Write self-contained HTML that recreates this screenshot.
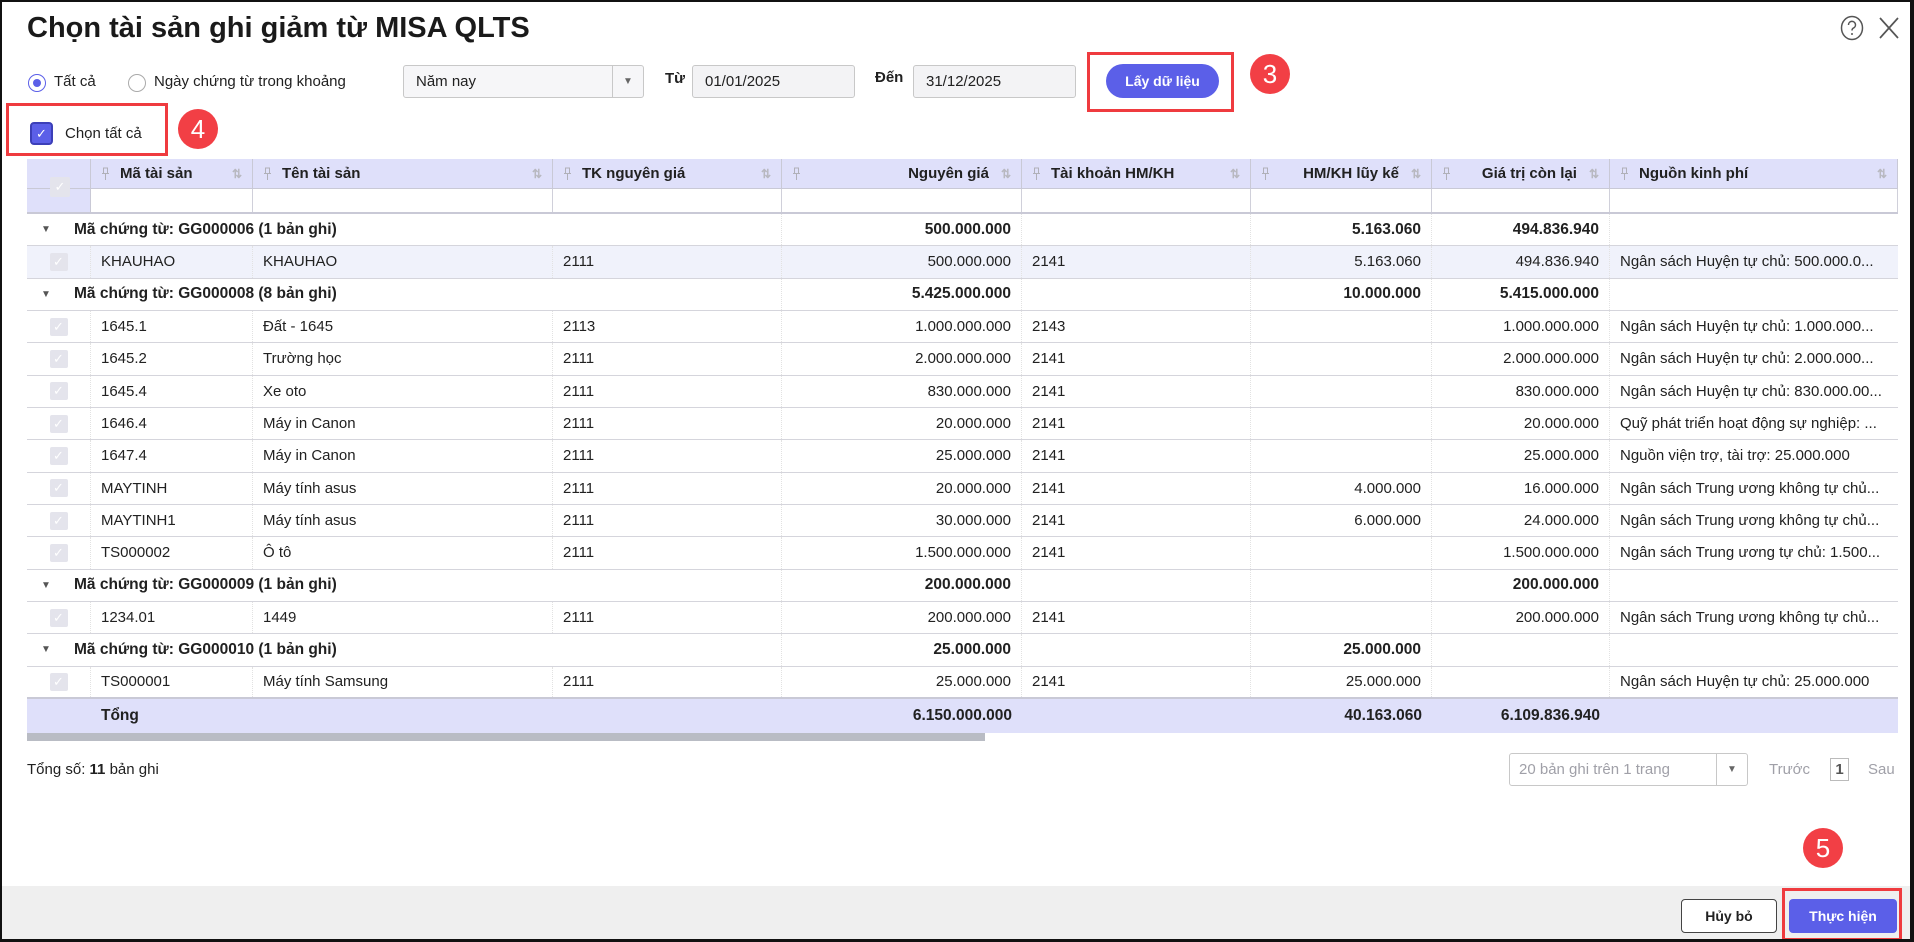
<!DOCTYPE html>
<html><head><meta charset="utf-8"><style>
*{box-sizing:border-box;margin:0;padding:0}
body{width:1914px;height:942px;overflow:hidden;background:#fff;font-family:"Liberation Sans",Arial,sans-serif;color:#212121;font-size:15px;position:relative}
.frame{position:absolute;left:0;top:0;width:1914px;height:942px;border:2px solid #111;border-right-width:4px;border-bottom-width:3px;pointer-events:none;z-index:10}
.a{position:absolute}
.title{left:27px;top:12px;font-size:29px;font-weight:bold;color:#1a1a1a}
.radio{width:18px;height:18px;border-radius:50%;border:1px solid #aaa;background:#fff}
.input{border:1px solid #c8c8c8;border-radius:3px;background:#f3f3f5;height:33px;line-height:31px;padding-left:12px;font-size:15px}
.badge{border-radius:50%;background:#f23f45;color:#fff;font-size:26px;text-align:center}
.redbox{border:3px solid #ef3b3f}
.tbl{left:27px;top:159px;width:1871px}
.row{display:flex;height:32.33px;border-bottom:1px solid #d5d5dc;align-items:center;position:relative}
.c{height:100%;display:flex;align-items:center;border-right:1px dotted #e2e2e2;white-space:nowrap;overflow:hidden;padding:0 10px}
.r{justify-content:flex-end}
.w0{width:64px;justify-content:center}.w1{width:162px}.w2{width:300px}.w3{width:229px}.w4{width:240px}.w5{width:229px}.w6{width:181px}.w7{width:178px}.w8{width:288px;border-right:none}
.hd{background:#dfe0fa;font-weight:bold;height:30px;border-bottom:1px solid #c9c9d6}
.hd .c{border-right:1px solid #c9c9d6}
.flt{height:25px;border-bottom:2px solid #c9c9d6}
.flt .c{border-right:1px solid #d0d0da}
.g{font-weight:bold;font-size:15.5px}
.cb{width:18px;height:18px;background:#e4e4ec;border-radius:2px;color:#fff;font-size:13px;line-height:18px;text-align:center}
.pin{margin-right:10px;display:inline-block;width:9px;height:14px;flex:none}
.sort{color:#b8b8c0;font-size:12px;margin-left:auto;padding-left:6px}
.tri{position:absolute;left:14px;font-size:10px;color:#555}
.glab{position:absolute;left:47px}
</style></head><body>
<svg width="0" height="0" style="position:absolute"><defs><symbol id="pin" viewBox="0 0 9 14"><path d="M2 1h5M2.5 1v5.5h4V1M1 6.5h7M4.5 6.5V13" fill="none" stroke="#b0b0b8" stroke-width="1"/></symbol></defs></svg>
<div class="frame"></div>
<div class="a title">Chọn tài sản ghi giảm từ MISA QLTS</div>
<svg class="a" style="left:1840px;top:15px" width="24" height="26" viewBox="0 0 24 26"><ellipse cx="12" cy="13" rx="10.5" ry="11.5" fill="none" stroke="#555" stroke-width="1.5"/><path d="M8.5 10a3.5 3.5 0 1 1 5 3c-1.2.6-1.5 1.3-1.5 2.5" fill="none" stroke="#555" stroke-width="1.5"/><circle cx="12" cy="19" r="1" fill="#555"/></svg>
<svg class="a" style="left:1877px;top:15px" width="24" height="26"><path d="M3 3L21 23M21 3L3 23" stroke="#555" stroke-width="1.7"/></svg>

<div class="a radio" style="left:28px;top:74px;border:1px solid #5b5fe8"><div style="position:absolute;left:4px;top:4px;width:8px;height:8px;border-radius:50%;background:#5b5fe8"></div></div>
<div class="a" style="left:54px;top:73px">Tất cả</div>
<div class="a radio" style="left:128px;top:74px"></div>
<div class="a" style="left:154px;top:73px">Ngày chứng từ trong khoảng</div>
<div class="a input" style="left:403px;top:65px;width:241px;background:#f6f6f8">Năm nay<div style="position:absolute;right:0;top:0;width:31px;height:31px;border-left:1px solid #c8c8c8;text-align:center;font-size:10px;color:#666">▼</div></div>
<div class="a" style="left:665px;top:70px;font-weight:bold">Từ</div>
<div class="a input" style="left:692px;top:65px;width:163px">01/01/2025</div>
<div class="a" style="left:875px;top:69px;font-weight:bold">Đến</div>
<div class="a input" style="left:913px;top:65px;width:163px">31/12/2025</div>
<div class="a redbox" style="left:1087px;top:52px;width:147px;height:60px"></div>
<div class="a" style="left:1106px;top:64px;width:113px;height:34px;border-radius:17px;background:#5b5fe8;color:#fff;font-weight:bold;font-size:14px;text-align:center;line-height:34px">Lấy dữ liệu</div>
<div class="a badge" style="left:1250px;top:54px;width:40px;height:40px;line-height:40px">3</div>

<div class="a redbox" style="left:6px;top:103px;width:162px;height:53px"></div>
<div class="a" style="left:30px;top:122px;width:23px;height:23px;border-radius:4px;background:#5b5fe8;border:2px solid #3c3fb8;color:#fff;font-size:13px;text-align:center;line-height:19px">✓</div>
<div class="a" style="left:65px;top:125px">Chọn tất cả</div>
<div class="a badge" style="left:178px;top:109px;width:40px;height:40px;line-height:40px">4</div>

<div class="a tbl">
<div class="row hd" style="height:30px;border-bottom:1px solid #c9c9d6"><div class="c w0" style="background:#dfe0fa;border-right:1px solid #c9c9d6"></div><div class="c w1"><svg class="pin"><use href="#pin"/></svg>Mã tài sản<span class="sort">⇅</span></div><div class="c w2"><svg class="pin"><use href="#pin"/></svg>Tên tài sản<span class="sort">⇅</span></div><div class="c w3"><svg class="pin"><use href="#pin"/></svg>TK nguyên giá<span class="sort">⇅</span></div><div class="c w4"><svg class="pin"><use href="#pin"/></svg><span style="margin-left:auto">Nguyên giá</span><span class="sort" style="margin-left:6px">⇅</span></div><div class="c w5"><svg class="pin"><use href="#pin"/></svg>Tài khoản HM/KH<span class="sort">⇅</span></div><div class="c w6"><svg class="pin"><use href="#pin"/></svg><span style="margin-left:auto">HM/KH lũy kế</span><span class="sort" style="margin-left:6px">⇅</span></div><div class="c w7"><svg class="pin"><use href="#pin"/></svg><span style="margin-left:auto">Giá trị còn lại</span><span class="sort" style="margin-left:6px">⇅</span></div><div class="c w8" style="border-right:1px solid #c9c9d6"><svg class="pin"><use href="#pin"/></svg>Nguồn kinh phí<span class="sort">⇅</span></div></div>
<div class="row flt" style="height:25px"><div class="c w0" style="background:#dfe0fa;border-right:1px solid #c9c9d6"></div><div class="c w1"></div><div class="c w2"></div><div class="c w3"></div><div class="c w4"></div><div class="c w5"></div><div class="c w6"></div><div class="c w7"></div><div class="c w8" style="border-right:1px solid #d0d0da"></div></div>

<div class="row g"><span class="tri">▼</span><span class="glab">Mã chứng từ: GG000006 (1 bản ghi)</span><div class="c w0" style="border:none"></div><div class="c w1" style="border:none"></div><div class="c w2" style="border:none"></div><div class="c w3"></div><div class="c w4 r">500.000.000</div><div class="c w5"></div><div class="c w6 r">5.163.060</div><div class="c w7 r">494.836.940</div><div class="c w8"></div></div>
<div class="row" style="background:#f0f2fb"><div class="c w0"><div class="cb">✓</div></div><div class="c w1">KHAUHAO</div><div class="c w2">KHAUHAO</div><div class="c w3">2111</div><div class="c w4 r">500.000.000</div><div class="c w5">2141</div><div class="c w6 r">5.163.060</div><div class="c w7 r">494.836.940</div><div class="c w8">Ngân sách Huyện tự chủ: 500.000.0...</div></div>
<div class="row g"><span class="tri">▼</span><span class="glab">Mã chứng từ: GG000008 (8 bản ghi)</span><div class="c w0" style="border:none"></div><div class="c w1" style="border:none"></div><div class="c w2" style="border:none"></div><div class="c w3"></div><div class="c w4 r">5.425.000.000</div><div class="c w5"></div><div class="c w6 r">10.000.000</div><div class="c w7 r">5.415.000.000</div><div class="c w8"></div></div>
<div class="row"><div class="c w0"><div class="cb">✓</div></div><div class="c w1">1645.1</div><div class="c w2">Đất - 1645</div><div class="c w3">2113</div><div class="c w4 r">1.000.000.000</div><div class="c w5">2143</div><div class="c w6 r"></div><div class="c w7 r">1.000.000.000</div><div class="c w8">Ngân sách Huyện tự chủ: 1.000.000...</div></div>
<div class="row"><div class="c w0"><div class="cb">✓</div></div><div class="c w1">1645.2</div><div class="c w2">Trường học</div><div class="c w3">2111</div><div class="c w4 r">2.000.000.000</div><div class="c w5">2141</div><div class="c w6 r"></div><div class="c w7 r">2.000.000.000</div><div class="c w8">Ngân sách Huyện tự chủ: 2.000.000...</div></div>
<div class="row"><div class="c w0"><div class="cb">✓</div></div><div class="c w1">1645.4</div><div class="c w2">Xe oto</div><div class="c w3">2111</div><div class="c w4 r">830.000.000</div><div class="c w5">2141</div><div class="c w6 r"></div><div class="c w7 r">830.000.000</div><div class="c w8">Ngân sách Huyện tự chủ: 830.000.00...</div></div>
<div class="row"><div class="c w0"><div class="cb">✓</div></div><div class="c w1">1646.4</div><div class="c w2">Máy in Canon</div><div class="c w3">2111</div><div class="c w4 r">20.000.000</div><div class="c w5">2141</div><div class="c w6 r"></div><div class="c w7 r">20.000.000</div><div class="c w8">Quỹ phát triển hoạt động sự nghiệp: ...</div></div>
<div class="row"><div class="c w0"><div class="cb">✓</div></div><div class="c w1">1647.4</div><div class="c w2">Máy in Canon</div><div class="c w3">2111</div><div class="c w4 r">25.000.000</div><div class="c w5">2141</div><div class="c w6 r"></div><div class="c w7 r">25.000.000</div><div class="c w8">Nguồn viện trợ, tài trợ: 25.000.000</div></div>
<div class="row"><div class="c w0"><div class="cb">✓</div></div><div class="c w1">MAYTINH</div><div class="c w2">Máy tính asus</div><div class="c w3">2111</div><div class="c w4 r">20.000.000</div><div class="c w5">2141</div><div class="c w6 r">4.000.000</div><div class="c w7 r">16.000.000</div><div class="c w8">Ngân sách Trung ương không tự chủ...</div></div>
<div class="row"><div class="c w0"><div class="cb">✓</div></div><div class="c w1">MAYTINH1</div><div class="c w2">Máy tính asus</div><div class="c w3">2111</div><div class="c w4 r">30.000.000</div><div class="c w5">2141</div><div class="c w6 r">6.000.000</div><div class="c w7 r">24.000.000</div><div class="c w8">Ngân sách Trung ương không tự chủ...</div></div>
<div class="row"><div class="c w0"><div class="cb">✓</div></div><div class="c w1">TS000002</div><div class="c w2">Ô tô</div><div class="c w3">2111</div><div class="c w4 r">1.500.000.000</div><div class="c w5">2141</div><div class="c w6 r"></div><div class="c w7 r">1.500.000.000</div><div class="c w8">Ngân sách Trung ương tự chủ: 1.500...</div></div>
<div class="row g"><span class="tri">▼</span><span class="glab">Mã chứng từ: GG000009 (1 bản ghi)</span><div class="c w0" style="border:none"></div><div class="c w1" style="border:none"></div><div class="c w2" style="border:none"></div><div class="c w3"></div><div class="c w4 r">200.000.000</div><div class="c w5"></div><div class="c w6 r"></div><div class="c w7 r">200.000.000</div><div class="c w8"></div></div>
<div class="row"><div class="c w0"><div class="cb">✓</div></div><div class="c w1">1234.01</div><div class="c w2">1449</div><div class="c w3">2111</div><div class="c w4 r">200.000.000</div><div class="c w5">2141</div><div class="c w6 r"></div><div class="c w7 r">200.000.000</div><div class="c w8">Ngân sách Trung ương không tự chủ...</div></div>
<div class="row g"><span class="tri">▼</span><span class="glab">Mã chứng từ: GG000010 (1 bản ghi)</span><div class="c w0" style="border:none"></div><div class="c w1" style="border:none"></div><div class="c w2" style="border:none"></div><div class="c w3"></div><div class="c w4 r">25.000.000</div><div class="c w5"></div><div class="c w6 r">25.000.000</div><div class="c w7 r"></div><div class="c w8"></div></div>
<div class="row" style="border-bottom:2px solid #c9c9d6"><div class="c w0"><div class="cb">✓</div></div><div class="c w1">TS000001</div><div class="c w2">Máy tính Samsung</div><div class="c w3">2111</div><div class="c w4 r">25.000.000</div><div class="c w5">2141</div><div class="c w6 r">25.000.000</div><div class="c w7 r"></div><div class="c w8">Ngân sách Huyện tự chủ: 25.000.000</div></div>
<div class="row g" style="background:#dfe0fa;border:none;height:34px"><div class="c w0" style="border:none"></div><div class="c w1" style="border:none">Tổng</div><div class="c w2" style="border:none"></div><div class="c w3" style="border:none"></div><div class="c w4 r" style="border:none">6.150.000.000</div><div class="c w5" style="border:none"></div><div class="c w6 r" style="border:none">40.163.060</div><div class="c w7 r" style="border:none">6.109.836.940</div><div class="c w8"></div></div>
<div style="width:958px;height:8px;background:#b9bcc4"></div>
</div>
<div class="a cb" style="left:50px;top:177px;width:20px;height:20px;line-height:20px">✓</div>

<div class="a" style="left:27px;top:761px">Tổng số: <b>11</b> bản ghi</div>
<div class="a" style="left:1509px;top:753px;width:239px;height:33px;border:1px solid #c8c8c8;border-radius:3px;color:#a0a0a8;line-height:31px;padding-left:9px">20 bản ghi trên 1 trang<div style="position:absolute;right:0;top:0;width:31px;height:31px;border-left:1px solid #c8c8c8;text-align:center;font-size:10px;color:#666">▼</div></div>
<div class="a" style="left:1769px;top:761px;color:#a0a0a8">Trước</div>
<div class="a" style="left:1830px;top:758px;width:19px;height:23px;border:1px solid #bbb;text-align:center;line-height:21px;font-weight:bold;color:#555">1</div>
<div class="a" style="left:1868px;top:761px;color:#a0a0a8">Sau</div>
<div class="a badge" style="left:1803px;top:828px;width:40px;height:40px;line-height:40px">5</div>
<div class="a" style="left:0;top:886px;width:1914px;height:56px;background:#efefef"></div>
<div class="a" style="left:1681px;top:899px;width:96px;height:34px;border:1px solid #444;border-radius:4px;background:#fff;text-align:center;line-height:32px;font-weight:bold;font-size:14px">Hủy bỏ</div>
<div class="a redbox" style="left:1782px;top:888px;width:120px;height:53px"></div>
<div class="a" style="left:1789px;top:899px;width:108px;height:34px;border-radius:4px;background:#5b5fe8;color:#fff;text-align:center;line-height:34px;font-weight:bold;font-size:14px">Thực hiện</div>
</body></html>
